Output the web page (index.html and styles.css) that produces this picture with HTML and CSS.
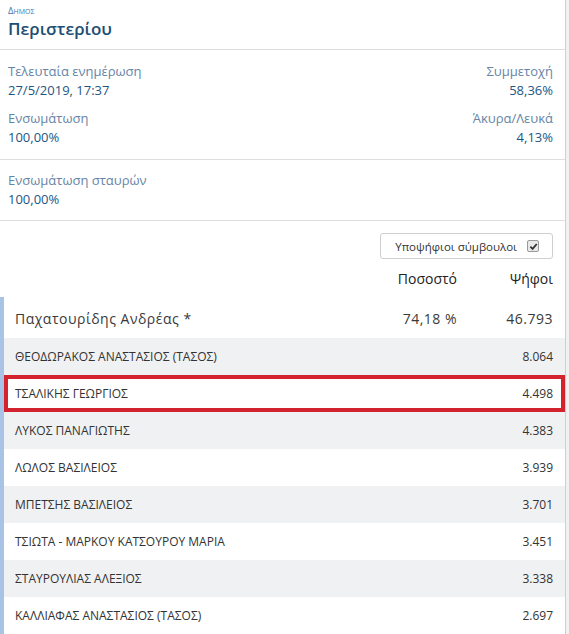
FILE: index.html
```html
<!DOCTYPE html>
<html lang="el">
<head>
<meta charset="utf-8">
<title>Περιστερίου</title>
<link rel="stylesheet" href="styles.css">
</head>
<body>
<div class="panel">
  <div class="head">
    <div class="kicker">Δημος</div>
    <div class="title">Περιστερίου</div>
  </div>
  <div class="stats">
    <div class="pair">
      <div class="stat">
        <div class="lbl">Τελευταία ενημέρωση</div>
        <div class="val">27/5/2019, 17:37</div>
      </div>
      <div class="stat right">
        <div class="lbl">Συμμετοχή</div>
        <div class="val">58,36%</div>
      </div>
    </div>
    <div class="pair">
      <div class="stat">
        <div class="lbl">Ενσωμάτωση</div>
        <div class="val">100,00%</div>
      </div>
      <div class="stat right">
        <div class="lbl">Άκυρα/Λευκά</div>
        <div class="val">4,13%</div>
      </div>
    </div>
  </div>
  <div class="stats single">
    <div class="stat">
      <div class="lbl">Ενσωμάτωση σταυρών</div>
      <div class="val">100,00%</div>
    </div>
  </div>
  <div class="results">
    <div class="toolbar">
      <label class="toggle">Υποψήφιοι σύμβουλοι <span class="box"><svg viewBox="0 0 10 10" width="9" height="9"><path d="M1.5 5.2 L4 7.6 L8.6 2.2" fill="none" stroke="#333" stroke-width="2"/></svg></span></label>
    </div>
    <div class="thead">
      <div class="name"></div>
      <div class="pct">Ποσοστό</div>
      <div class="votes">Ψήφοι</div>
    </div>
    <div class="rows">
      <div class="row lead"><div class="name">Παχατουρίδης Ανδρέας *</div><div class="pct">74,18 %</div><div class="votes">46.793</div></div>
      <div class="row alt"><div class="name">ΘΕΟΔΩΡΑΚΟΣ ΑΝΑΣΤΑΣΙΟΣ (ΤΑΣΟΣ)</div><div class="pct"></div><div class="votes">8.064</div></div>
      <div class="row marked"><div class="name">ΤΣΑΛΙΚΗΣ ΓΕΩΡΓΙΟΣ</div><div class="pct"></div><div class="votes">4.498</div></div>
      <div class="row alt"><div class="name">ΛΥΚΟΣ ΠΑΝΑΓΙΩΤΗΣ</div><div class="pct"></div><div class="votes">4.383</div></div>
      <div class="row"><div class="name">ΛΩΛΟΣ ΒΑΣΙΛΕΙΟΣ</div><div class="pct"></div><div class="votes">3.939</div></div>
      <div class="row alt"><div class="name">ΜΠΕΤΣΗΣ ΒΑΣΙΛΕΙΟΣ</div><div class="pct"></div><div class="votes">3.701</div></div>
      <div class="row"><div class="name">ΤΣΙΩΤΑ - ΜΑΡΚΟΥ ΚΑΤΣΟΥΡΟΥ ΜΑΡΙΑ</div><div class="pct"></div><div class="votes">3.451</div></div>
      <div class="row alt"><div class="name">ΣΤΑΥΡΟΥΛΙΑΣ ΑΛΕΞΙΟΣ</div><div class="pct"></div><div class="votes">3.338</div></div>
      <div class="row"><div class="name">ΚΑΛΛΙΑΦΑΣ ΑΝΑΣΤΑΣΙΟΣ (ΤΑΣΟΣ)</div><div class="pct"></div><div class="votes">2.697</div></div>
    </div>
  </div>
</div>
</body>
</html>
```
FILE: styles.css
```css
html, body {
  margin: 0;
  padding: 0;
  background: #f1f1f1;
  height: 634px;
  overflow: hidden;
}
body {
  font-family: "Open Sans", "Noto Sans", sans-serif;
  color: #333;
}
.panel {
  width: 565px;
  min-height: 634px;
  background: #fff;
  border-right: 1px solid #cfcfcf;
}
.head {
  padding: 4px 8px 9px;
  border-bottom: 1px solid #dedede;
}
.kicker {
  font-size: 9.5px;
  line-height: 14px;
  font-variant: small-caps;
  color: #3b78b5;
}
.title {
  font-size: 17px;
  line-height: 22px;
  font-weight: 600;
  color: #1d4e72;
}
.stats {
  padding: 12px 12px 12px 8px;
  border-bottom: 1px solid #dedede;
  display: flex;
  flex-direction: column;
  gap: 9px;
}
.stats.single {
  padding-top: 11px;
  padding-bottom: 11px;
}
.pair {
  display: flex;
  justify-content: space-between;
}
.stat.right {
  text-align: right;
}
.lbl {
  font-size: 13px;
  line-height: 19px;
  color: #6585a6;
}
.val {
  font-size: 13px;
  line-height: 19px;
  color: #1c5683;
}
.results {
  padding-top: 12px;
}
.toolbar {
  display: flex;
  justify-content: flex-end;
  padding-right: 12px;
}
.toggle {
  display: flex;
  align-items: center;
  gap: 10px;
  height: 24px;
  padding: 0 13px 0 14px;
  border: 1px solid #cfcfcf;
  border-radius: 3px;
  font-size: 11.5px;
  color: #333;
}
.box {
  width: 10px;
  height: 10px;
  border: 1px solid #999;
  border-radius: 2px;
  background: #e9e9e9;
  display: flex;
  align-items: center;
  justify-content: center;
}
.thead {
  display: flex;
  align-items: center;
  height: 38px;
  padding-right: 12px;
  font-size: 14px;
  color: #222;
}
.name { flex: 1; }
.pct { width: 100px; text-align: right; }
.votes { width: 96px; text-align: right; }
.rows {
  border-left: 4px solid #a9c3e6;
}
.row {
  display: flex;
  align-items: center;
  height: 37px;
  padding: 0 12px 0 11px;
  font-size: 12px;
  color: #333;
}
.row.lead {
  height: 41px;
  padding-top: 1px;
  box-sizing: border-box;
  font-size: 14px;
  letter-spacing: 0.5px;
  color: #3a3a3a;
}
.row.alt {
  background: #f0f1f3;
}
.row.marked {
  outline: 4px solid #d2232f;
  outline-offset: -4px;
}
```
